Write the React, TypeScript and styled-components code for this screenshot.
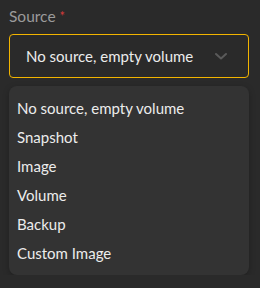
import React from 'react';
import styled, { createGlobalStyle } from 'styled-components';

const GlobalStyle = createGlobalStyle`
  body {
    margin: 0;
    background: #2a2a2a;
    font-family: Lato, "Noto Sans", sans-serif;
  }
`;

const Field = styled.div`
  padding: 7px 11px 0 9px;
  display: flex;
  flex-direction: column;
`;

const Label = styled.label`
  color: #9b9b9b;
  font-size: 15.5px;
  line-height: 18px;
  height: 27px;
`;

const Required = styled.span`
  color: #d33a3a;
  font-size: 13px;
  margin-left: 4px;
  vertical-align: top;
`;

const SelectBox = styled.div`
  box-sizing: border-box;
  height: 44px;
  border: 1px solid #f2b400;
  border-radius: 4px;
  display: flex;
  align-items: center;
  justify-content: space-between;
  padding: 0 21px 0 16px;
  color: #ececec;
  font-size: 15px;
`;

const Menu = styled.ul`
  list-style: none;
  margin: 8px 0 0;
  padding: 7px 0 8px;
  background: #333333;
  border-radius: 8px;
  box-shadow: 0 2px 6px rgba(0, 0, 0, 0.25);
`;

const Option = styled.li`
  height: 29px;
  display: flex;
  align-items: center;
  padding: 0 8px;
  color: #ececec;
  font-size: 15px;
`;

const options = [
  'No source, empty volume',
  'Snapshot',
  'Image',
  'Volume',
  'Backup',
  'Custom Image',
];

const Chevron = () => (
  <svg width="12" height="7" viewBox="0 0 12 7" fill="none">
    <path d="M1 1 L6 5.5 L11 1" stroke="#5a5a5a" strokeWidth="2" strokeLinecap="round" strokeLinejoin="round" />
  </svg>
);

export default function App() {
  return (
    <>
      <GlobalStyle />
      <Field>
        <Label>
          Source<Required>*</Required>
        </Label>
        <SelectBox>
          <span>No source, empty volume</span>
          <Chevron />
        </SelectBox>
        <Menu>
          {options.map((o) => (
            <Option key={o}>{o}</Option>
          ))}
        </Menu>
      </Field>
    </>
  );
}
